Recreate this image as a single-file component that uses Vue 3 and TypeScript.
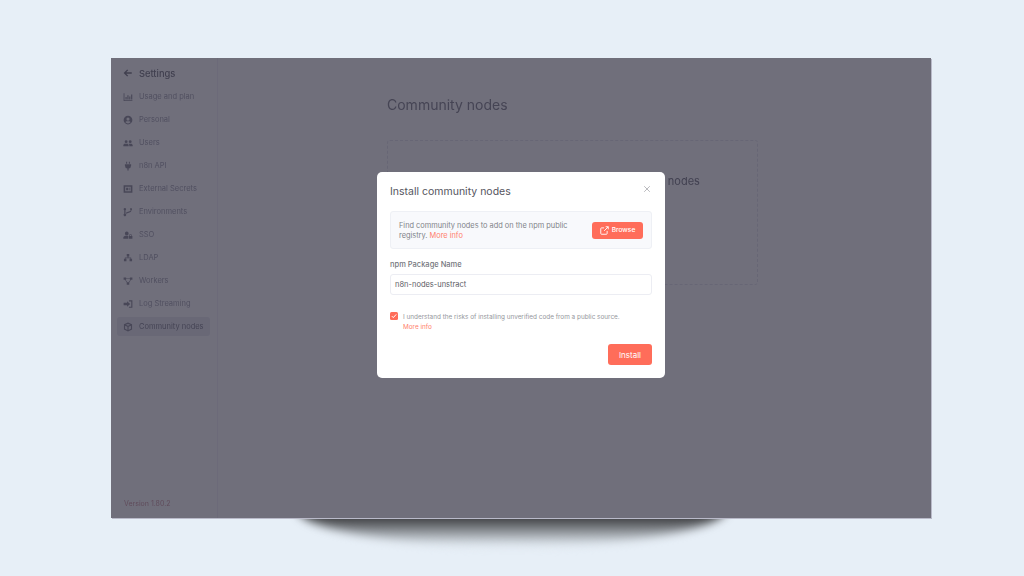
<script setup lang="ts">
interface NavItem {
  label: string
  icon: string
  active?: boolean
}

// icons are hand drawn on a 16×16 grid, filled with currentColor
const navItems: NavItem[] = [
  { label: 'Usage and plan', icon: 'M1 2h1.3v11H15v1.3H1zM4 8h1.8v4H4zM7 5h1.8v7H7zM10 7h1.8v5H10zM13 4h1.8v8H13z' },
  { label: 'Personal', icon: 'M8 1a7 7 0 1 0 0 14A7 7 0 0 0 8 1zm0 3a2.5 2.5 0 1 1 0 5 2.5 2.5 0 0 1 0-5zm0 9.4a5.4 5.4 0 0 1-4-1.8C4.400 10.400 5.500 10 6.500 10h3c1 0 2.100.4 2.500 1.600a5.400 5.400 0 0 1-4 1.800z' },
  { label: 'Users', icon: 'M5 3.500a2.300 2.300 0 1 1 0 4.600 2.300 2.300 0 0 1 0-4.600zM11.500 3.500a2.300 2.300 0 1 1 0 4.600 2.300 2.300 0 0 1 0-4.600zM.5 13v-1.500C.5 10 1.800 9 3.200 9h3.400C8 9 9 10 9 11.500V13zM10 13v-1.500c0-1-.3-1.800-.8-2.500h3.300c1.600 0 3 1 3 2.500V13z' },
  { label: 'n8n API', icon: 'M5 1h1.600v3.500H5zM9.400 1H11v3.500H9.400zM3 5h10v2a5 5 0 0 1-4 4.800V15H7v-3.200A5 5 0 0 1 3 7z' },
  { label: 'External Secrets', icon: 'M1 2h14v12H1zm2.500 2.500v7h9v-7zM5 6h3.500v4H5zM10 6h1.500v1.500H10zM10 8.500h1.500V10H10z' },
  { label: 'Environments', icon: 'M3 1.500a2 2 0 0 1 1 3.700v5.600a2 2 0 1 1-2 0V5.200a2 2 0 0 1 1-3.700zM12.500 1.500a2 2 0 0 1 1 3.700c0 3.300-3.500 3.800-6.500 4.800-.8.300-1.500.6-2 1V8.700c2.500-1.200 6.800-1.200 7.500-3.500a2 2 0 0 1 0-3.700z' },
  { label: 'SSO', icon: 'M6 2.500a3 3 0 1 1 0 6 3 3 0 0 1 0-6zM.5 14v-1.500C.5 10.500 2 9 4 9h4v5zM9 9.500h6V14H9zM10.200 9.500V8a1.800 1.800 0 0 1 3.600 0v1.500h-1V8a.8.800 0 0 0-1.600 0v1.500z' },
  { label: 'LDAP', icon: 'M6 1.500h4v4H8.700v1.800H13v2h1.500v4h-4v-4H12V8.300H4v1h1.500v4h-4v-4H3v-2h4.300V5.500H6z' },
  { label: 'Workers', icon: 'M1 2.500h4v3.500H4.200L7 10h2l2.800-4H11V2.500h4V6h-2.200L10 10.300V14H6v-3.700L3.200 6H1zM5 3.500v1h6v-1z' },
  { label: 'Log Streaming', icon: 'M9.500 2H15v12H9.500v-1.800h3.700V3.800H9.500zM6.500 3.500 11.500 8l-5 4.500V10H1V6h5.500z' },
  { label: 'Community nodes', icon: 'M8 .8 14.500 3.500v8.500L8 15.200 1.500 12V3.500zM8 3 4.400 4.500 8 6l3.600-1.500zM3.300 6v4.800l3.800 1.900V7.500zm9.400 0L8.900 7.500v5.200l3.800-1.900z', active: true },
]
</script>

<template>
  <main class="page">
    <div class="ground-shadow" />
    <div class="window">
      <aside class="sidebar">
        <header class="side-head">
          <svg class="back" viewBox="0 0 16 16" aria-hidden="true">
            <path d="M14 8H3M7.500 3 2.500 8l5 5" fill="none" stroke="currentColor" stroke-width="2.200" />
          </svg>
          <span>Settings</span>
        </header>
        <nav class="nav">
          <a v-for="item in navItems" :key="item.label" class="nav-item" :class="{ active: item.active }">
            <svg class="nav-icon" viewBox="0 0 16 16" aria-hidden="true">
              <path :d="item.icon" fill="currentColor" fill-rule="evenodd" />
            </svg>
            <span>{{ item.label }}</span>
          </a>
        </nav>
        <div class="version">Version 1.80.2</div>
      </aside>

      <section class="content">
        <h1>Community nodes</h1>
        <div class="empty">
          <p>Supercharge your workflows with community nodes</p>
        </div>
      </section>

      <div class="scrim" />

      <div class="dialog" role="dialog">
        <div class="dialog-head">
          <h2>Install community nodes</h2>
          <svg class="close" viewBox="0 0 10 10" aria-hidden="true">
            <path d="M1.500 1.500l7 7M8.500 1.500l-7 7" stroke="currentColor" stroke-width="1" fill="none" />
          </svg>
        </div>

        <div class="info">
          <p>Find community nodes to add on the npm public registry. <a>More info</a></p>
          <button class="browse">
            <svg viewBox="0 0 12 12" aria-hidden="true">
              <path d="M5.500 2.500H2a1 1 0 0 0-1 1V10a1 1 0 0 0 1 1h6.500a1 1 0 0 0 1-1V6.500M7.500 1H11v3.500M11 1 5.500 6.500" fill="none" stroke="currentColor" stroke-width="1.200" />
            </svg>
            Browse
          </button>
        </div>

        <label class="field-label">npm Package Name</label>
        <div class="input">n8n-nodes-unstract</div>

        <div class="consent">
          <span class="check">
            <svg viewBox="0 0 8 8" aria-hidden="true">
              <path d="M1.800 4.100 3.300 5.600 6.200 2.400" fill="none" stroke="#fff" stroke-width="1" />
            </svg>
          </span>
          <p>I understand the risks of installing unverified code from a public source.<br /><a>More info</a></p>
        </div>

        <div class="actions">
          <button class="install">Install</button>
        </div>
      </div>
    </div>
  </main>
</template>

<style>
body {
  background: #e7eff7;
}
</style>

<style scoped>
.page {
  position: relative;
  width: 1024px;
  height: 576px;
  padding: 58px 0 0 111px;
  box-sizing: border-box;
  overflow: hidden;
  font-family: Inter, "Liberation Sans", sans-serif;
  background: #e7eff7;
}

/* soft shadow the window throws on the ground */
.ground-shadow {
  position: absolute;
  left: 297px;
  top: 470px;
  width: 430px;
  height: 76px;
  border-radius: 50%;
  background: linear-gradient(to bottom, #3a3b3e 62%, #e7eff7 100%);
  filter: blur(5px);
}

/* the reference is an upscaled capture, so everything in the window is a touch soft */
.window {
  position: relative;
  display: flex;
  width: 820px;
  height: 460px;
  background: #f1f1f3;
  box-shadow: 1px 1px 0 #b9bac9;
  filter: blur(0.35px);
}

.sidebar {
  display: flex;
  flex-direction: column;
  width: 107px;
  padding: 0 7px 0 6px;
  box-sizing: border-box;
  border-right: 1px solid #e8e6ec;
}

.side-head {
  display: flex;
  align-items: center;
  gap: 6px;
  height: 30px;
  padding-left: 6px;
  font-size: 9.300px;
  font-weight: 500;
  color: #77777f;
}

.back {
  width: 10px;
  height: 10px;
}

.nav {
  display: flex;
  flex-direction: column;
  gap: 4px;
  margin-top: -1px;
}

.nav-item {
  display: flex;
  align-items: center;
  gap: 6px;
  height: 19px;
  padding-left: 6px;
  border-radius: 3px;
  font-size: 7.500px;
  color: #a2a2ac;
  white-space: nowrap;
}

.nav-item.active {
  background: #dfdfe6;
  color: #84848f;
}

.nav-icon {
  flex: none;
  width: 10px;
  height: 10px;
  color: #8b8b96;
}

.version {
  margin-top: auto;
  padding: 0 0 10px 7px;
  font-size: 7px;
  color: #c99aa0;
}

.content {
  flex: 1;
  padding: 38px 0 0 169px;
}

h1 {
  margin: 0;
  font-size: 14px;
  line-height: 18px;
  font-weight: 400;
  color: #85858e;
}

.empty {
  width: 371px;
  height: 145px;
  margin-top: 26px;
  padding-right: 16px;
  box-sizing: border-box;
  border: 1px dashed #dcdce2;
  border-radius: 3px;
  text-align: center;
}

.empty p {
  margin: 33px 0 0;
  font-size: 11px;
  line-height: 14px;
  color: #7a7a84;
}

.scrim {
  position: absolute;
  inset: 0;
  background: rgba(30, 28, 47, 0.61);
}

.dialog {
  position: absolute;
  left: 266px;
  top: 114px;
  width: 288px;
  height: 206px;
  padding: 0 13px;
  box-sizing: border-box;
  border-radius: 5px;
  background: #fff;
  color: #555;
}

.dialog-head {
  display: flex;
  align-items: flex-start;
  justify-content: space-between;
  height: 39px;
  padding-top: 12px;
  box-sizing: border-box;
}

h2 {
  margin: 0;
  font-size: 10.500px;
  line-height: 15px;
  font-weight: 400;
  color: #55555e;
}

.close {
  width: 8px;
  height: 8px;
  margin: 1px 1px 0 0;
  color: #a8a8ad;
}

.info {
  display: flex;
  align-items: center;
  justify-content: space-between;
  height: 38px;
  padding: 0 8px;
  box-sizing: border-box;
  border: 1px solid #eef0f5;
  border-radius: 3px;
  background: #f8f9fc;
}

.info p {
  width: 180px;
  margin: 2px 0 0;
  font-size: 7.400px;
  line-height: 10.500px;
  color: #808389;
}

a {
  color: #ff7f6e;
}

.browse {
  display: flex;
  align-items: center;
  justify-content: center;
  gap: 3px;
  width: 51px;
  height: 17px;
  padding: 0;
  border: 0;
  border-radius: 3px;
  background: #ff6d5a;
  color: #fff;
  font: 500 6.600px Inter, sans-serif;
}

.browse svg {
  width: 9px;
  height: 9px;
}

.field-label {
  display: block;
  margin-top: 11px;
  font-size: 7.500px;
  line-height: 10px;
  font-weight: 500;
  color: #74767d;
}

.input {
  height: 21px;
  margin-top: 4px;
  padding-left: 4px;
  box-sizing: border-box;
  border: 1px solid #ecedf3;
  border-radius: 3px;
  font-size: 7.500px;
  line-height: 20px;
  color: #5c5c65;
}

.consent {
  display: flex;
  gap: 5px;
  margin-top: 17px;
}

.check {
  display: flex;
  flex: none;
  width: 8px;
  height: 8px;
  border-radius: 1.500px;
  background: #ff6d5a;
}

.consent p {
  margin: 0;
  font-size: 6.400px;
  line-height: 10px;
  color: #95979d;
}

.actions {
  display: flex;
  justify-content: flex-end;
  margin-top: 12px;
}

.install {
  width: 44px;
  height: 21px;
  padding: 0;
  border: 0;
  border-radius: 3px;
  background: #ff6d5a;
  color: #fff;
  font: 400 8px Inter, sans-serif;
}
</style>
